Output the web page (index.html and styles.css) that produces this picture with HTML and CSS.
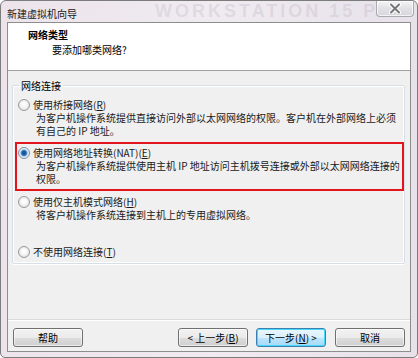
FILE: index.html
```html
<!DOCTYPE html>
<html lang="zh-CN">
<head>
    <meta charset="UTF-8">
    <meta name="viewport" content="width=device-width, initial-scale=1.0">
    <title>新建虚拟机向导</title>
    <link rel="stylesheet" href="styles.css">
</head>
<body>
    <div class="window">
        <div class="titlebar">
            <span class="title">新建虚拟机向导</span>
            <span class="watermark">WORKSTATION 15 PRO</span>
            <div class="close">
                <svg width="14" height="11" viewBox="0 0 14 11">
                    <path d="M3 1.5 L11 9.5 M11 1.5 L3 9.5" stroke="#fff" stroke-width="4" stroke-linecap="round"/>
                    <path d="M3 1.5 L11 9.5 M11 1.5 L3 9.5" stroke="#777" stroke-width="2" stroke-linecap="round"/>
                </svg>
            </div>
        </div>

        <div class="client">
            <div class="header">
                <div class="h-title">网络类型</div>
                <div class="h-sub">要添加哪类网络?</div>
            </div>

            <div class="content">
                <fieldset class="group">
                    <legend>网络连接</legend>

                    <div class="opt first">
                        <div class="radio"><span class="dot"></span>使用桥接网络(<u>R</u>)</div>
                        <p class="desc">为客户机操作系统提供直接访问外部以太网网络的权限。客户机在外部网络上必须有自己的 IP 地址。</p>
                    </div>

                    <div class="opt marked">
                        <div class="radio"><span class="dot on"></span>使用网络地址转换(NAT)(<u>E</u>)</div>
                        <p class="desc">为客户机操作系统提供使用主机 IP 地址访问主机拨号连接或外部以太网网络连接的权限。</p>
                    </div>

                    <div class="opt third">
                        <div class="radio"><span class="dot"></span>使用仅主机模式网络(<u>H</u>)</div>
                        <p class="desc">将客户机操作系统连接到主机上的专用虚拟网络。</p>
                    </div>

                    <div class="opt last">
                        <div class="radio"><span class="dot"></span>不使用网络连接(<u>T</u>)</div>
                    </div>
                </fieldset>
            </div>

            <div class="footer">
                <button class="btn">帮助</button>
                <button class="btn back">&lt; 上一步(<u>B</u>)</button>
                <button class="btn default">下一步(<u>N</u>) &gt;</button>
                <button class="btn">取消</button>
            </div>
        </div>
    </div>
</body>
</html>
```

FILE: styles.css
```css
*{
    box-sizing: border-box;
}
body{
    margin: 0;
    background: #fff;
    font-family: "Noto Sans CJK SC", "Liberation Sans", sans-serif;
    font-size: 10px;
    line-height: 13px;
    color: #000;
}
.window{
    width: 418px;
    height: 358px;
    border: 1px solid #7c7c7c;
    border-radius: 6px 6px 5px 5px;
    background: linear-gradient(90deg, #ece4ea, #efebf0 50%, #e7e2ea);
    display: flex;
    flex-direction: column;
    padding: 0 6px 5px 6px;
}
.titlebar{
    height: 21px;
    display: flex;
    align-items: center;
    position: relative;
}
.title{
    font-size: 10px;
    color: #1a1a1a;
    margin-top: 3px;
    position: relative;
    z-index: 1;
}
.watermark{
    position: absolute;
    left: 148px;
    top: 0;
    font-family: "Liberation Sans", sans-serif;
    font-weight: bold;
    font-size: 18px;
    line-height: 20px;
    letter-spacing: 3px;
    color: rgba(160, 140, 170, 0.2);
    white-space: nowrap;
}
.close{
    position: relative;
    margin-left: auto;
    margin-right: -3px;
    margin-top: -5px;
    width: 38px;
    height: 16px;
    border: 1px solid #a9a9ae;
    border-top: none;
    border-radius: 0 0 4px 4px;
    background: linear-gradient(#f4f4f6, #e1e1e5 50%, #d6d6dc);
    box-shadow: inset 0 0 0 1px rgba(255,255,255,0.7);
    display: flex;
    align-items: center;
    justify-content: center;
}
.client{
    flex: 1;
    border: 1px solid #8d8d8d;
    background: #f0f0f0;
    display: flex;
    flex-direction: column;
}
.header{
    height: 48px;
    background: #fff;
    border-bottom: 1px solid #a0a0a0;
    padding: 5px 0 0 20px;
}
.h-title{
    font-weight: bold;
}
.h-sub{
    margin-top: 2px;
    padding-left: 24px;
}
.content{
    flex: 1;
    padding: 8px 5px 0 4px;
}
.group{
    margin: 0;
    border: 1px solid #d5dfe5;
    border-radius: 2px;
    box-shadow: inset 0 0 0 1px #fff, 0 1px 0 #fff;
    padding: 6px 0 5px 2px;
}
.group legend{
    padding: 0 2px;
    margin-left: 4px;
}
.opt{
    padding-left: 3px;
}
.opt.first{
    margin-bottom: 5px;
}
.opt.marked{
    border: 2px solid #e3151c;
    padding: 2px 0 4px 1px;
}
.opt.third{
    margin-top: 4px;
}
.opt.last{
    margin-top: 24px;
}
.radio{
    display: flex;
    align-items: center;
    color: #1a1a1a;
}
.dot{
    width: 12px;
    height: 12px;
    border: 1px solid #9a9a9a;
    border-radius: 50%;
    background: radial-gradient(circle at 50% 45%, #fdfdfd 0 25%, #e2e2e2 75%, #d0d0d0);
    margin-right: 3px;
    flex: none;
}
.dot.on{
    border-color: #7d8fa0;
    background: radial-gradient(circle, #1b5a9e 0 2px, #5a9fd8 3px, #e8eef4 4px, #dde2e7 100%);
}
.desc{
    margin: 0 0 0 18px;
    color: #1a1a1a;
}
.footer{
    height: 32px;
    border-top: 1px solid #dadada;
    box-shadow: inset 0 1px 0 #fff;
    display: flex;
    align-items: flex-start;
    padding: 8px 5px 0 5px;
}
.btn{
    width: 70px;
    height: 19px;
    padding: 0;
    font-family: inherit;
    font-size: 10px;
    line-height: 13px;
    color: #000;
    border: 1px solid #707070;
    border-radius: 3px;
    background: linear-gradient(#f2f2f2, #ebebeb 50%, #dddddd 50%, #cfcfcf);
    box-shadow: inset 0 0 0 1px rgba(255,255,255,0.6);
}
.btn.back{
    margin-left: auto;
    margin-right: 8px;
}
.btn.default{
    margin-right: 9px;
    border-color: #3c7fb1;
    background: linear-gradient(#eaf6fd, #d9f0fc 50%, #bee6fd 50%, #a7d9f5);
    box-shadow: inset 0 0 0 1px #48d8fb;
}
```
